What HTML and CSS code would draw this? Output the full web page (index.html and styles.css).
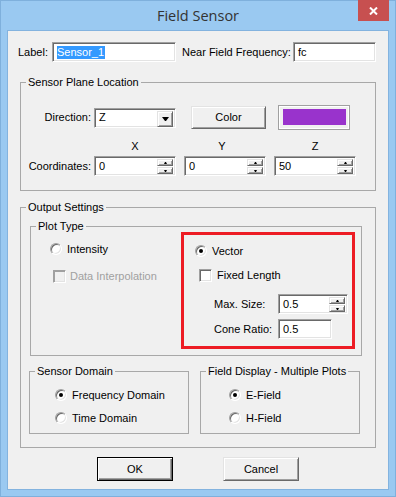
FILE: index.html
```html
<!DOCTYPE html>
<html lang="en">
<head>
  <meta charset="UTF-8" />
  <title>Field Sensor</title>
  <link rel="stylesheet" href="styles.css">
</head>
<body>
  <div class="window">
    <div class="titlebar">
      <span class="title">Field Sensor</span>
      <span class="close">
        <svg width="9" height="8" viewBox="0 0 9 8"><path d="M1 0.5 L8 7.5 M8 0.5 L1 7.5" stroke="#fff" stroke-width="2"/></svg>
      </span>
    </div>

    <div class="client">
      <div class="top-row">
        <span class="lbl lbl-label">Label:</span>
        <span class="field label-field"><span class="selected">Sensor_1</span></span>
        <span class="lbl lbl-freq">Near Field Frequency:</span>
        <span class="field freq-field">fc</span>
      </div>

      <fieldset class="group plane">
        <legend>Sensor Plane Location</legend>
        <div class="plane-body">
          <div class="dir-row">
            <span class="row-label">Direction:</span>
            <span class="field combo">Z<span class="combo-btn btn"><span class="arrow-down"></span></span></span>
            <span class="btn color-btn">Color</span>
            <span class="swatch"><span class="swatch-fill"></span></span>
          </div>
          <div class="axis-row">
            <span class="axis">X</span>
            <span class="axis axis-y">Y</span>
            <span class="axis">Z</span>
          </div>
          <div class="coord-row">
            <span class="row-label">Coordinates:</span>
            <span class="field spin">0<span class="spin-btns"><span class="btn up"></span><span class="btn down"></span></span></span>
            <span class="field spin">0<span class="spin-btns"><span class="btn up"></span><span class="btn down"></span></span></span>
            <span class="field spin">50<span class="spin-btns"><span class="btn up"></span><span class="btn down"></span></span></span>
          </div>
        </div>
      </fieldset>

      <fieldset class="group output">
        <legend>Output Settings</legend>
        <div class="output-body">
          <fieldset class="group plot-type">
            <legend>Plot Type</legend>
            <div class="plot-body">
              <div class="plot-left">
                <div class="opt"><span class="radio"></span><span>Intensity</span></div>
                <div class="opt opt-check disabled"><span class="check"></span><span>Data Interpolation</span></div>
              </div>
              <div class="plot-right">
                <div class="opt"><span class="radio on"></span><span>Vector</span></div>
                <div class="opt opt-check fixed"><span class="check"></span><span>Fixed Length</span></div>
                <div class="param-row max-size">
                  <span class="param-label">Max. Size:</span>
                  <span class="field spin size-spin">0.5<span class="spin-btns"><span class="btn up"></span><span class="btn down"></span></span></span>
                </div>
                <div class="param-row cone">
                  <span class="param-label">Cone Ratio:</span>
                  <span class="field cone-field">0.5</span>
                </div>
              </div>
            </div>
          </fieldset>

          <div class="domains">
            <fieldset class="group domain">
              <legend>Sensor Domain</legend>
              <div class="domain-body sensor-domain">
                <div class="opt"><span class="radio on"></span><span>Frequency Domain</span></div>
                <div class="opt"><span class="radio"></span><span>Time Domain</span></div>
              </div>
            </fieldset>
            <fieldset class="group domain">
              <legend>Field Display - Multiple Plots</legend>
              <div class="domain-body field-display">
                <div class="opt"><span class="radio on"></span><span>E-Field</span></div>
                <div class="opt"><span class="radio"></span><span>H-Field</span></div>
              </div>
            </fieldset>
          </div>
        </div>
      </fieldset>

      <div class="actions">
        <span class="btn dialog-btn default">OK</span>
        <span class="btn dialog-btn">Cancel</span>
      </div>
    </div>
  </div>
</body>
</html>
```

FILE: styles.css
```css
body {
  margin: 0;
  font-family: "Liberation Sans", Arial, sans-serif;
  font-size: 11px;
  line-height: 13px;
  color: #000;
  background: #9ac9f1;
}

.window {
  position: relative;
  width: 396px;
  height: 497px;
  box-sizing: border-box;
  border: 1px solid #7fb0dc;
  background: #9ac9f1;
}

.titlebar {
  height: 29px;
  display: flex;
  align-items: center;
  justify-content: center;
}

.title {
  font-family: "Open Sans", "Noto Sans", sans-serif;
  font-size: 14.5px;
  color: #333;
}

.close {
  position: absolute;
  top: -1px;
  right: 6px;
  width: 31px;
  height: 21px;
  background: #c75050;
  display: flex;
  align-items: center;
  justify-content: center;
}

.client {
  margin: 0 6px;
  height: 458px;
  border: 1px solid #83b3df;
  background: #f0f0f0;
}

/* sunken edit box */
.field {
  box-sizing: border-box;
  height: 20px;
  display: flex;
  align-items: center;
  padding-left: 4px;
  background: #fff;
  border: 1px solid;
  border-color: #a0a0a0 #fff #fff #a0a0a0;
  box-shadow: inset 1px 1px 0 #696969, inset -1px -1px 0 #e3e3e3;
  flex: none;
}

/* raised button */
.btn {
  box-sizing: border-box;
  display: flex;
  align-items: center;
  justify-content: center;
  background: #f0f0f0;
  border: 1px solid;
  border-color: #e3e3e3 #696969 #696969 #e3e3e3;
  box-shadow: inset 1px 1px 0 #fff, inset -1px -1px 0 #a0a0a0;
  flex: none;
}

.top-row {
  display: flex;
  align-items: center;
  height: 20px;
  margin: 11px 0 0 10px;
}

.lbl-label {
  width: 34px;
}

.label-field {
  width: 124px;
}

.selected {
  background: #3399ff;
  color: #fff;
  padding: 0 1px 0 0;
}

.lbl-freq {
  width: 111px;
  margin-left: 6px;
}

.freq-field {
  width: 83px;
}

.group {
  margin: 0;
  padding: 0;
  min-width: 0;
  border: 1px solid #a8a8a8;
  box-sizing: border-box;
}

.group legend {
  padding: 0 2px;
  margin-left: 5px;
  line-height: 13px;
}

.plane {
  width: 356px;
  margin: 14px 0 0 12px;
}

.plane-body {
  padding: 16px 0 14px 0;
}

.dir-row,
.coord-row {
  display: flex;
  align-items: center;
}

.dir-row {
  height: 25px;
}

.row-label {
  width: 70px;
  margin-right: 3px;
  text-align: right;
}

.combo {
  position: relative;
  width: 82px;
}

.combo-btn {
  position: absolute;
  right: 2px;
  top: 2px;
  width: 16px;
  height: 16px;
}

.arrow-down {
  width: 1px;
  border-left: 3px solid transparent;
  border-right: 3px solid transparent;
  border-top: 4px solid #000;
}

.color-btn {
  width: 75px;
  height: 23px;
  margin-left: 15px;
}

.swatch {
  box-sizing: border-box;
  width: 72px;
  height: 25px;
  margin-left: 12px;
  padding: 3px 3px 4px 4px;
  border: 1px solid #a0a0a0;
  box-shadow: inset 0 0 0 1px #fff;
  background: #f0f0f0;
  flex: none;
}

.swatch-fill {
  display: block;
  height: 100%;
  background: #9933cc;
}

.axis-row {
  display: flex;
  gap: 8px;
  margin-top: 10px;
  padding-left: 73px;
}

.axis {
  width: 82px;
  text-align: center;
}

.axis-y {
  box-sizing: border-box;
  padding-right: 6px;
}

.coord-row {
  margin-top: 3px;
  gap: 8px;
}

.coord-row .row-label {
  margin-right: -5px;
}

.spin {
  position: relative;
  width: 82px;
}

.spin-btns {
  position: absolute;
  right: 2px;
  top: 2px;
  display: flex;
  flex-direction: column;
  gap: 1px;
}

.spin-btns .btn {
  width: 16px;
  height: 7px;
}

.up::before,
.down::before {
  content: "";
  width: 1px;
  border-left: 1px solid transparent;
  border-right: 1px solid transparent;
}

.up::before {
  border-bottom: 2px solid #000;
}

.down::before {
  border-top: 2px solid #000;
}

.output {
  width: 356px;
  margin: 10px 0 0 12px;
}

.output-body {
  padding: 6px 0 13px 0;
}

.plot-type {
  width: 332px;
  margin-left: 9px;
}

.plot-body {
  display: flex;
  align-items: flex-start;
  padding-bottom: 6px;
}

.plot-left {
  width: 150px;
  padding: 10px 0 0 19px;
  box-sizing: border-box;
}

.opt {
  display: flex;
  align-items: center;
  gap: 5px;
  height: 12px;
  white-space: nowrap;
}

.opt-check {
  height: 13px;
  margin-top: 15px;
  margin-left: 3px;
  gap: 4px;
}

.disabled {
  color: #a0a0a0;
}

.radio {
  position: relative;
  width: 12px;
  height: 12px;
  box-sizing: border-box;
  border-radius: 50%;
  background: #fff;
  border: 1px solid;
  border-color: #a0a0a0 #fff #fff #a0a0a0;
  box-shadow: inset 1px 1px 0 #696969, inset -1px -1px 0 #e3e3e3;
  flex: none;
}

.radio.on::after {
  content: "";
  position: absolute;
  left: 3px;
  top: 3px;
  width: 4px;
  height: 4px;
  border-radius: 50%;
  background: #000;
}

.check {
  width: 13px;
  height: 13px;
  box-sizing: border-box;
  background: #fff;
  border: 1px solid;
  border-color: #a0a0a0 #fff #fff #a0a0a0;
  box-shadow: inset 1px 1px 0 #696969, inset -1px -1px 0 #e3e3e3;
  flex: none;
}

.disabled .check {
  background: #f0f0f0;
  border-color: #a0a0a0 #fff #fff #a0a0a0;
  box-shadow: inset 1px 1px 0 #a0a0a0, inset -1px -1px 0 #e3e3e3;
}

.plot-right {
  box-sizing: border-box;
  width: 174px;
  height: 117px;
  margin-top: -1px;
  padding: 10px 0 0 11px;
  border: 3px solid #ed1c24;
}

.fixed {
  margin-top: 12px;
  margin-left: 4px;
  gap: 5px;
}

.param-row {
  display: flex;
  align-items: center;
  height: 20px;
  padding-left: 19px;
}

.max-size {
  margin-top: 12px;
}

.cone {
  margin-top: 5px;
}

.param-label {
  width: 64px;
}

.size-spin {
  width: 70px;
}

.cone-field {
  width: 54px;
}

.domains {
  display: flex;
  gap: 11px;
  margin: 9px 0 0 8px;
}

.domain {
  width: 160px;
}

.domain-body {
  display: flex;
  flex-direction: column;
  gap: 11px;
  padding: 11px 0 9px 25px;
}

.field-display {
  padding-left: 28px;
}

.actions {
  display: flex;
  justify-content: center;
  gap: 50px;
  margin-top: 9px;
}

.dialog-btn {
  width: 76px;
  height: 24px;
}

.dialog-btn.default {
  border-color: #000;
  box-shadow: inset 1px 1px 0 #fff, inset -1px -1px 0 #696969, inset -2px -2px 0 #a0a0a0;
}
```
